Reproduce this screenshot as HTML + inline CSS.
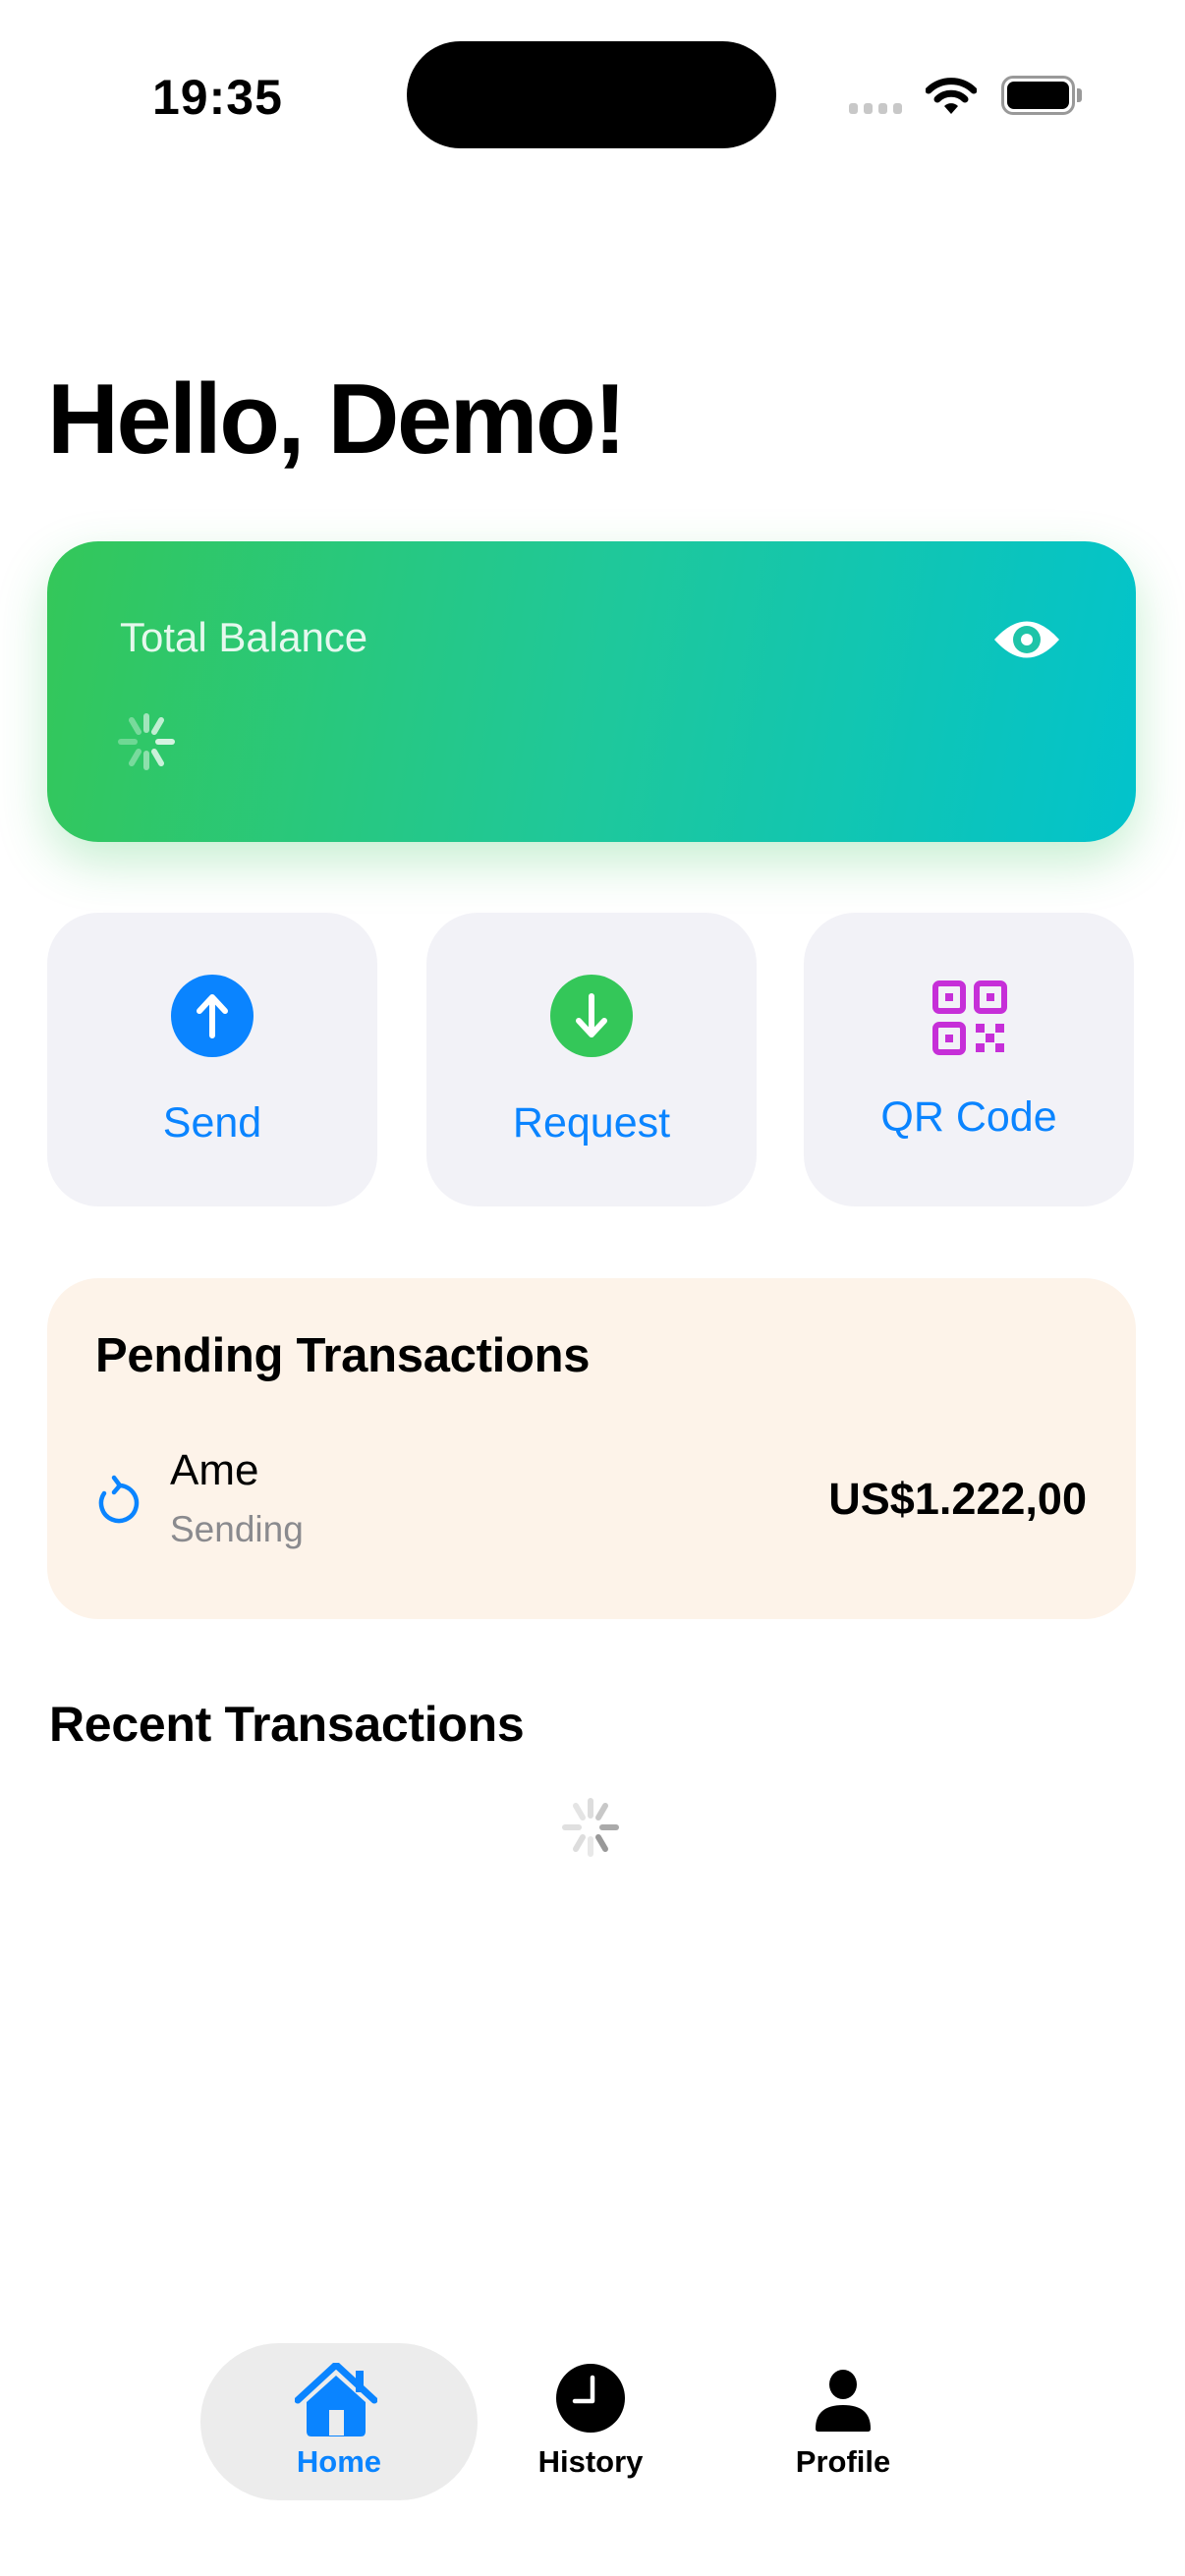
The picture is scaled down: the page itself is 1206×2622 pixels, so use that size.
<!DOCTYPE html>
<html><head><meta charset="utf-8"><style>
*{margin:0;padding:0;box-sizing:border-box}
body{width:1206px;height:2622px;background:#fff;font-family:"Liberation Sans",sans-serif;position:relative;overflow:hidden;color:#000}
.abs{position:absolute}
.btn{position:absolute;top:929px;width:336px;height:299px;background:#f2f2f7;border-radius:52px}
.btn .lab{position:absolute;left:0;right:0;text-align:center;font-size:43px;color:#0a84ff}
</style></head><body>
<div class="abs" style="left:155px;top:70px;font-size:50px;font-weight:bold;letter-spacing:1px">19:35</div>
<div class="abs" style="left:414px;top:42px;width:376px;height:109px;background:#000;border-radius:55px"></div>
<div class="abs" style="left:864px;top:105px;display:flex;gap:6px">
<i style="width:9px;height:11px;background:#c8c8c8;border-radius:3px;display:block"></i><i style="width:9px;height:11px;background:#c8c8c8;border-radius:3px;display:block"></i><i style="width:9px;height:11px;background:#c8c8c8;border-radius:3px;display:block"></i><i style="width:9px;height:11px;background:#c8c8c8;border-radius:3px;display:block"></i></div>
<svg class="abs" style="left:942px;top:78px" width="52" height="40" viewBox="0 0 52 40"><path d="M3 14 A33 33 0 0 1 49 14" stroke="#000" stroke-width="7" fill="none" stroke-linecap="round"/><path d="M12 23 A20 20 0 0 1 40 23" stroke="#000" stroke-width="7" fill="none" stroke-linecap="round"/><path d="M26 38 L19 30 A10 10 0 0 1 33 30 Z" fill="#000"/></svg>
<div class="abs" style="left:1019px;top:77px;width:75px;height:40px;border:3px solid #999;border-radius:12px;padding:3px"><div style="width:100%;height:100%;background:#000;border-radius:7px"></div></div>
<div class="abs" style="left:1096px;top:90px;width:5px;height:14px;background:#999;border-radius:0 3px 3px 0"></div>

<div class="abs" style="left:48px;top:370px;font-size:101px;font-weight:bold;letter-spacing:-2.5px">Hello, Demo!</div>

<div class="abs" style="left:48px;top:551px;width:1108px;height:306px;border-radius:52px;background:linear-gradient(100deg,#34c759 0%,#1fc89a 50%,#02c3cc 100%);box-shadow:0 20px 50px rgba(52,199,89,.28)"></div>
<div class="abs" style="left:122px;top:625px;font-size:42px;color:rgba(255,255,255,.88)">Total Balance</div>
<svg class="abs" style="left:1010px;top:628px" width="70" height="46" viewBox="0 0 70 46"><path d="M2 23 Q35 -14 68 23 Q35 60 2 23Z" fill="#fff"/><circle cx="35" cy="23" r="14" fill="#1ec4a8"/><circle cx="35" cy="23" r="6" fill="#fff"/></svg>
<svg class="abs" style="left:119px;top:725px" width="60" height="60" viewBox="-30 -30 60 60" stroke-linecap="round" stroke-width="6">
<g stroke="#fff"><line x1="0" y1="-12" x2="0" y2="-26" opacity=".55"/><line x1="8" y1="-10" x2="15" y2="-22" opacity=".7"/><line x1="12" y1="0" x2="26" y2="0" opacity=".8"/><line x1="8" y1="10" x2="15" y2="22" opacity=".75"/><line x1="0" y1="12" x2="0" y2="26" opacity=".45"/><line x1="-8" y1="10" x2="-15" y2="22" opacity=".35"/><line x1="-12" y1="0" x2="-26" y2="0" opacity=".3"/><line x1="-8" y1="-10" x2="-15" y2="-22" opacity=".35"/></g></svg>

<div class="btn" style="left:48px"><svg style="position:absolute;left:126px;top:63px" width="84" height="84" viewBox="0 0 84 84"><circle cx="42" cy="42" r="42" fill="#0a84ff"/><path d="M42 62V23M29 37L42 23L55 37" stroke="#fff" stroke-width="6" fill="none" stroke-linecap="round" stroke-linejoin="round"/></svg><div class="lab" style="top:190px">Send</div></div>
<div class="btn" style="left:434px"><svg style="position:absolute;left:126px;top:63px" width="84" height="84" viewBox="0 0 84 84"><circle cx="42" cy="42" r="42" fill="#34c759"/><path d="M42 22V61M29 47L42 61L55 47" stroke="#fff" stroke-width="6" fill="none" stroke-linecap="round" stroke-linejoin="round"/></svg><div class="lab" style="top:190px">Request</div></div>
<div class="btn" style="left:818px"><svg style="position:absolute;left:131px;top:69px" width="76" height="76" viewBox="0 0 76 76" fill="none" stroke="#c62fd8" stroke-width="6"><rect x="3" y="3" width="28" height="28" rx="4"/><rect x="45" y="3" width="28" height="28" rx="4"/><rect x="3" y="45" width="28" height="28" rx="4"/><g fill="#c62fd8" stroke="none"><rect x="13" y="13" width="8" height="8"/><rect x="55" y="13" width="8" height="8"/><rect x="13" y="55" width="8" height="8"/><rect x="44" y="44" width="9" height="9"/><rect x="64" y="44" width="9" height="9"/><rect x="54" y="54" width="9" height="9"/><rect x="44" y="64" width="9" height="9"/><rect x="64" y="64" width="9" height="9"/></g></svg><div class="lab" style="top:184px">QR Code</div></div>

<div class="abs" style="left:48px;top:1301px;width:1108px;height:347px;border-radius:52px;background:#fdf3e9"></div>
<div class="abs" style="left:97px;top:1352px;font-size:49px;font-weight:bold;letter-spacing:-.3px">Pending Transactions</div>
<svg class="abs" style="left:97px;top:1498px" width="48" height="56" viewBox="0 0 48 56"><path d="M9 22 A18 18 0 1 0 24 14" stroke="#0a84ff" stroke-width="4.5" fill="none" stroke-linecap="round"/><path d="M19 6 L25 14 L19 21" stroke="#0a84ff" stroke-width="4.5" fill="none" stroke-linecap="round" stroke-linejoin="round"/></svg>
<div class="abs" style="left:173px;top:1472px;font-size:44px">Ame</div>
<div class="abs" style="left:173px;top:1536px;font-size:37px;color:#8a8a8e">Sending</div>
<div class="abs" style="right:100px;top:1500px;font-size:45px;font-weight:bold">US$1.222,00</div>

<div class="abs" style="left:50px;top:1726px;font-size:50px;font-weight:bold;letter-spacing:-.3px">Recent Transactions</div>
<svg class="abs" style="left:571px;top:1830px" width="60" height="60" viewBox="-30 -30 60 60" stroke-linecap="round" stroke-width="6">
<line x1="0" y1="-12" x2="0" y2="-27" stroke="#ddd"/><line x1="8" y1="-10" x2="15" y2="-22" stroke="#c8c8c8"/><line x1="12" y1="0" x2="26" y2="0" stroke="#aaa"/><line x1="8" y1="10" x2="15" y2="22" stroke="#999"/><line x1="0" y1="12" x2="0" y2="27" stroke="#e8e8e8"/><line x1="-8" y1="10" x2="-15" y2="22" stroke="#ddd"/><line x1="-12" y1="0" x2="-26" y2="0" stroke="#e0e0e0"/><line x1="-8" y1="-10" x2="-15" y2="-22" stroke="#e4e4e4"/></svg>

<div class="abs" style="left:204px;top:2385px;width:282px;height:160px;border-radius:80px;background:#ececec"></div>
<svg class="abs" style="left:300px;top:2405px" width="84" height="76" viewBox="0 0 84 76"><path d="M3 38 L42 2 L81 38" stroke="#0a84ff" stroke-width="7" fill="none" stroke-linecap="round" stroke-linejoin="round"/><rect x="62" y="8" width="8" height="22" fill="#0a84ff"/><path d="M12 40 L42 13 L72 40 V70 Q72 75 67 75 H17 Q12 75 12 70Z" fill="#0a84ff"/><rect x="35" y="48" width="15" height="26" fill="#ececec"/></svg>
<div class="abs" style="left:204px;top:2488px;width:282px;text-align:center;font-size:31px;font-weight:bold;color:#0a84ff">Home</div>
<svg class="abs" style="left:566px;top:2406px" width="70" height="70" viewBox="0 0 70 70"><circle cx="35" cy="35" r="35" fill="#000"/><path d="M37 14V38H19" stroke="#fff" stroke-width="4.5" fill="none" stroke-linecap="round" stroke-linejoin="round"/></svg>
<div class="abs" style="left:501px;top:2488px;width:200px;text-align:center;font-size:31px;font-weight:bold">History</div>
<svg class="abs" style="left:828px;top:2412px" width="60" height="64" viewBox="0 0 60 64"><ellipse cx="30" cy="15" rx="14" ry="15" fill="#000"/><path d="M2 60 Q2 36 30 36 Q58 36 58 60 Q58 63 55 63 H5 Q2 63 2 60Z" fill="#000"/></svg>
<div class="abs" style="left:758px;top:2488px;width:200px;text-align:center;font-size:31px;font-weight:bold">Profile</div>
</body></html>
